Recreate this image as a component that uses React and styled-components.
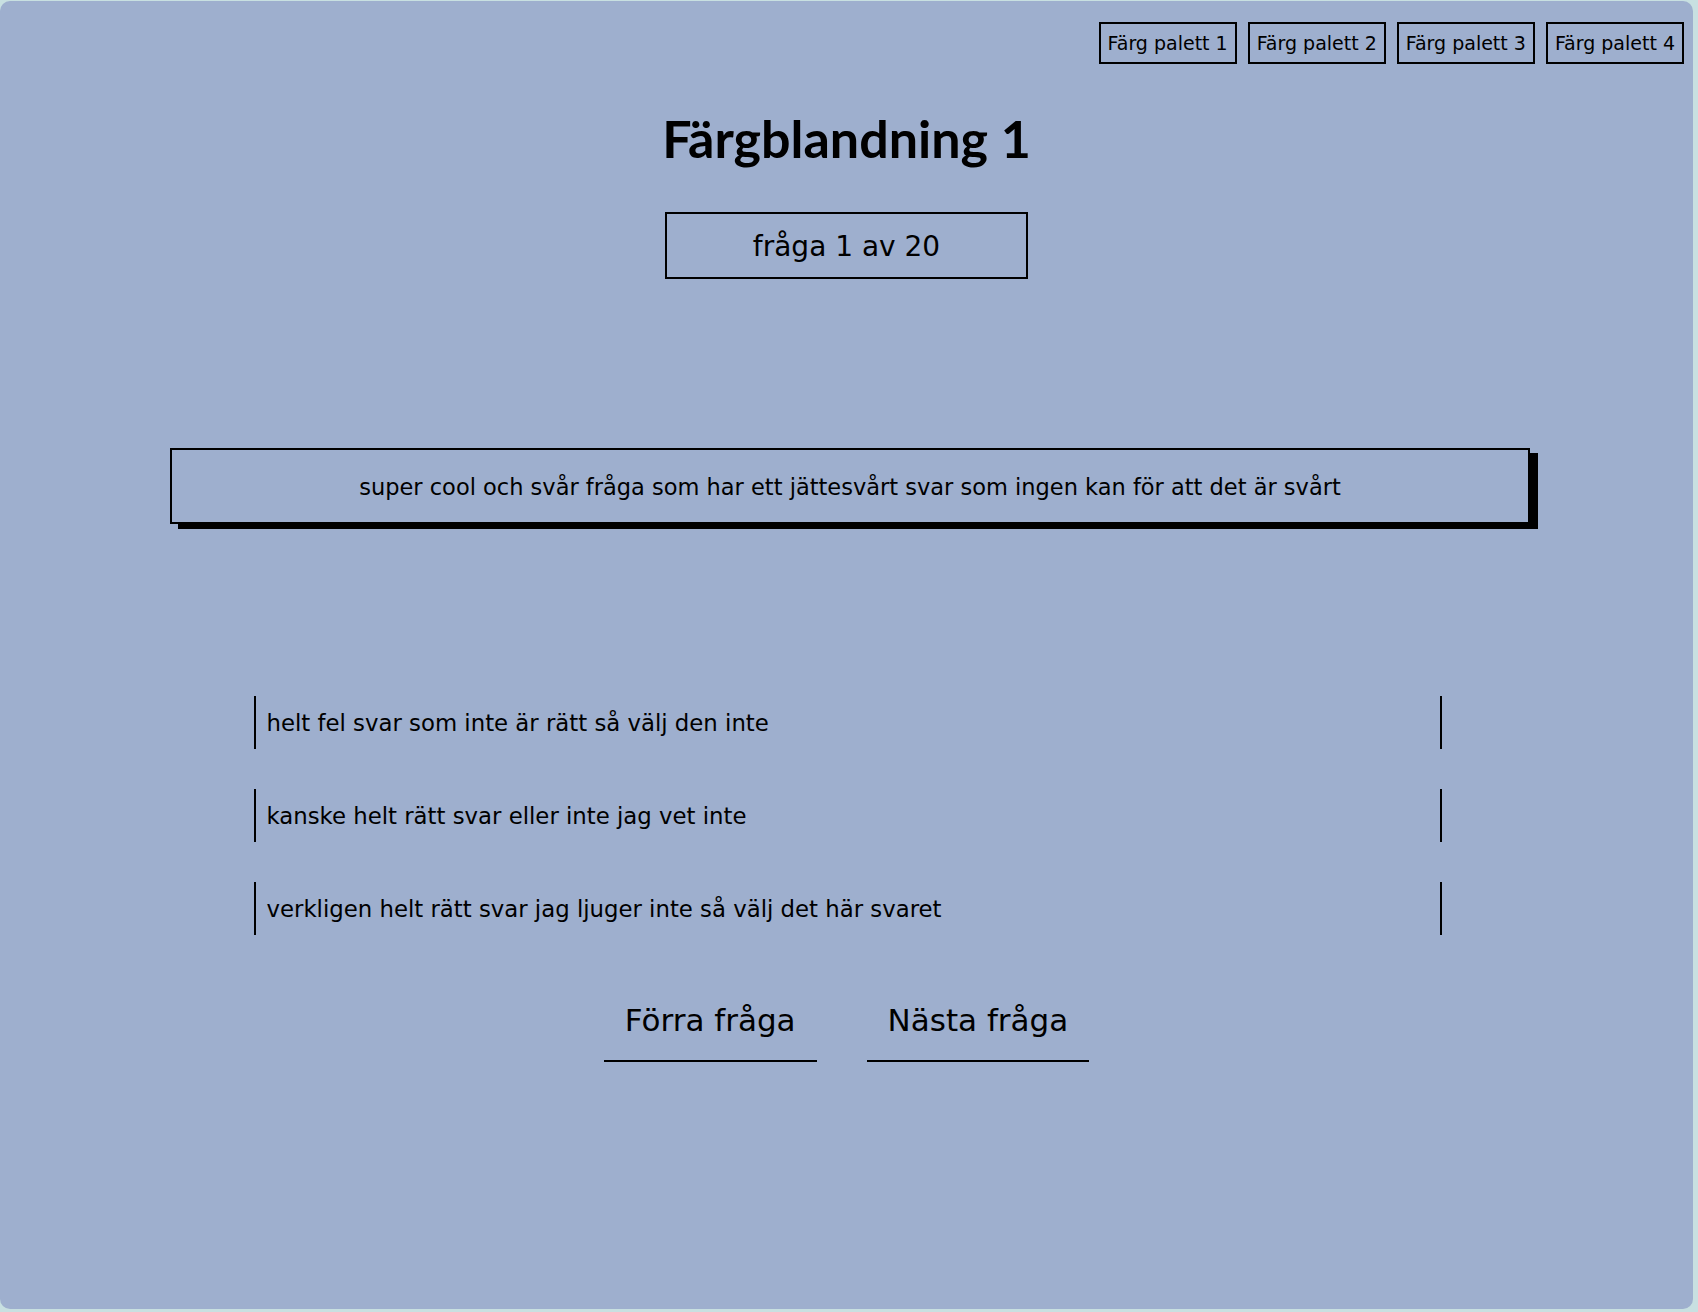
import React from "react";
import styled, { createGlobalStyle } from "styled-components";

const GlobalStyle = createGlobalStyle`
  html, body { margin: 0; padding: 0; background: #c8e0e1; }
  body { font-family: "Comic Sans MS", "DejaVu Sans", sans-serif; color: #000; }
  *, *::before, *::after { box-sizing: border-box; }
`;

const Page = styled.div`
  margin: 1px 5px 0 0;
  height: 1308px;
  background: #9eafce;
  border-radius: 10px;
  display: flex;
  flex-direction: column;
  align-items: center;
`;

const TopBar = styled.div`
  align-self: stretch;
  display: flex;
  justify-content: flex-end;
  gap: 11px;
  padding: 21px 9px 0 0;
`;

const PaletteButton = styled.button`
  font-family: inherit;
  font-size: 19px;
  line-height: 23px;
  padding: 7.5px 7px;
  border: 2px solid #000;
  background: transparent;
  color: #000;
  cursor: pointer;
`;

const Title = styled.h1`
  margin: 44px 0 0;
  font-family: "Comic Sans MS", Lato, sans-serif;
  font-weight: 700;
  font-size: 52px;
  line-height: 60px;
`;

const Counter = styled.div`
  margin-top: 44px;
  width: 363px;
  height: 67px;
  border: 2px solid #000;
  padding: 16px 0 12px;
  text-align: center;
  font-size: 28px;
  line-height: 34px;
`;

const QuestionBox = styled.div`
  margin: 169px 0 0 7px;
  width: 1360px;
  border: 2px solid #000;
  box-shadow: 8px 5px 0 #000;
  padding: 24px 20px 21px;
  text-align: center;
  font-size: 22.5px;
  line-height: 27px;
`;

const AnswerList = styled.div`
  margin: 172px 0 0 2px;
  width: 1188px;
  display: flex;
  flex-direction: column;
  gap: 40px;
`;

const AnswerRow = styled.div`
  height: 53px;
  border-left: 2px solid #000;
  border-right: 2px solid #000;
  padding: 1px 11px 0;
  display: flex;
  align-items: center;
  font-size: 22.8px;
  line-height: 27px;
  cursor: pointer;
`;

const NavRow = styled.div`
  margin-top: 40px;
  display: flex;
  gap: 50px;
`;

const NavButton = styled.button`
  font-family: inherit;
  background: none;
  border: none;
  border-bottom: 2px solid #000;
  color: #000;
  font-size: 31px;
  line-height: 38px;
  padding: 26px 21px 21px;
  cursor: pointer;
`;

const palettes = ["Färg palett 1", "Färg palett 2", "Färg palett 3", "Färg palett 4"];
const answers = [
  "helt fel svar som inte är rätt så välj den inte",
  "kanske helt rätt svar eller inte jag vet inte",
  "verkligen helt rätt svar jag ljuger inte så välj det här svaret",
];

export default function App() {
  return (
    <>
      <GlobalStyle />
      <Page>
        <TopBar>
          {palettes.map((p) => (
            <PaletteButton key={p}>{p}</PaletteButton>
          ))}
        </TopBar>
        <Title>Färgblandning 1</Title>
        <Counter>fråga 1 av 20</Counter>
        <QuestionBox>
          super cool och svår fråga som har ett jättesvårt svar som ingen kan för att det är svårt
        </QuestionBox>
        <AnswerList>
          {answers.map((a) => (
            <AnswerRow key={a}>{a}</AnswerRow>
          ))}
        </AnswerList>
        <NavRow>
          <NavButton>Förra fråga</NavButton>
          <NavButton>Nästa fråga</NavButton>
        </NavRow>
      </Page>
    </>
  );
}
